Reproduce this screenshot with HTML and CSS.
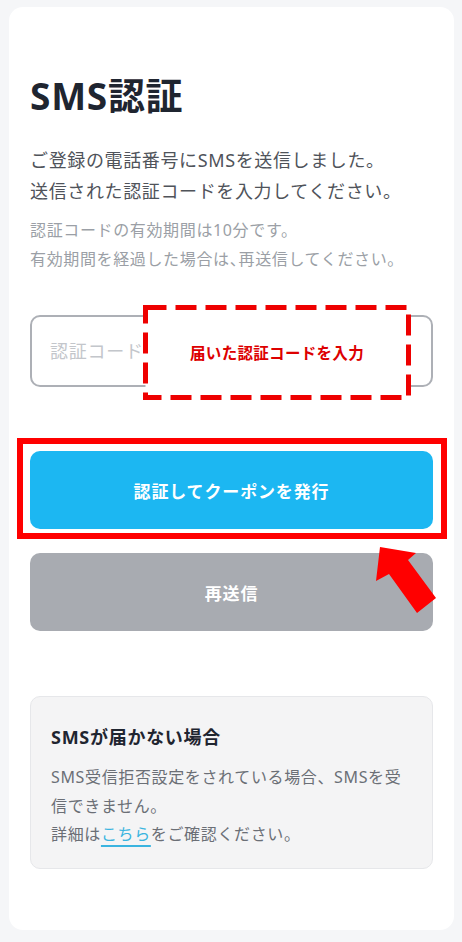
FILE: index.html
```html
<!DOCTYPE html>
<html lang="ja">
<head>
<meta charset="utf-8">
<title>SMS認証</title>
<link rel="stylesheet" href="styles.css">
</head>
<body>
<main class="card">
  <h1 class="title">SMS認証</h1>
  <p class="lead">ご登録の電話番号にSMSを送信しました。<br>送信された認証コードを入力してください。</p>
  <p class="note-text">認証コードの有効期間は10分です。<br>有効期間を経過した場合は<span class="half">、</span>再送信してください。</p>

  <div class="field">
    <input class="code-input" type="text" placeholder="認証コード">
    <div class="callout-dashed">
      <svg class="dash-frame" width="268" height="95" viewBox="0 0 268 95" preserveAspectRatio="none">
        <rect x="2.5" y="2.5" width="263" height="90" fill="#ffffff" stroke="#ee0000" stroke-width="5" stroke-dasharray="21 9"/>
      </svg>
      <span class="callout-text">届いた認証コードを入力</span>
    </div>
  </div>

  <div class="primary-wrap">
    <button class="btn btn-primary">認証してクーポンを発行</button>
    <div class="callout-frame"></div>
    <svg class="callout-arrow" width="60" height="66" viewBox="0 0 60 66">
      <polygon points="4,0 40,6 32,13 60,51 41,66 13,27 0,34" fill="#ff0000"/>
    </svg>
  </div>
  <button class="btn btn-secondary">再送信</button>

  <section class="help">
    <h2 class="help-title">SMSが届かない場合</h2>
    <p class="help-body">SMS受信拒否設定をされている場合、SMSを受<br>信できません。<br>詳細は<a class="help-link" href="#">こちら</a>をご確認ください。</p>
  </section>
</main>
</body>
</html>
```
FILE: styles.css
```css
* { box-sizing: border-box; }
html, body { margin: 0; padding: 0; }
body {
  background: #f5f6f8;
  padding: 7px 8px 13px 9px;
  font-family: "Noto Sans", "Noto Sans CJK JP", sans-serif;
}
.card {
  background: #ffffff;
  border-radius: 14px;
  padding: 65px 21px 61px 21px;
  display: flex;
  flex-direction: column;
}
.title {
  margin: 0;
  font-size: 37px;
  line-height: 48px;
  font-weight: 700;
  color: #1f2530;
  letter-spacing: 0.02em;
}
.lead {
  margin: 24.5px 0 0 0;
  font-size: 18px;
  line-height: 31px;
  color: #4f535a;
  letter-spacing: 0.035em;
}
.note-text {
  margin: 9px 0 0 0;
  font-size: 16px;
  line-height: 29px;
  color: #9b9fa6;
  letter-spacing: 0.04em;
}
.half {
  letter-spacing: -0.45em;
}
.field {
  position: relative;
  margin-top: 41.5px;
}
.code-input {
  display: block;
  width: 100%;
  height: 72px;
  border: 2px solid #adb0b6;
  border-radius: 10px;
  padding: 0 18px;
  font-family: inherit;
  font-size: 18px;
  color: #1f2530;
  background: #fff;
  outline: none;
  letter-spacing: 0.04em;
}
.code-input::placeholder { color: #c3c6cb; }
.callout-dashed {
  position: absolute;
  left: 113px;
  right: 22px;
  top: -10px;
  bottom: -13px;
  display: flex;
  align-items: center;
  justify-content: center;
}
.dash-frame {
  position: absolute;
  inset: 0;
  width: 100%;
  height: 100%;
}
.callout-text {
  position: relative;
  color: #dd0000;
  font-weight: 700;
  font-size: 15.5px;
  letter-spacing: 0.02em;
}
.primary-wrap {
  position: relative;
  margin-top: 64px;
}
.btn {
  display: flex;
  align-items: center;
  justify-content: center;
  width: 100%;
  height: 78px;
  border: none;
  border-radius: 10px;
  color: #ffffff;
  font-family: inherit;
  font-weight: 700;
  font-size: 17px;
  letter-spacing: 0.05em;
}
.btn-primary { background: #1cb7f2; }
.btn-secondary { background: #a8abb1; margin-top: 24px; }
.callout-frame {
  position: absolute;
  left: -13px;
  right: -14px;
  top: -13px;
  bottom: -10px;
  border: 6px solid #ff0000;
  pointer-events: none;
}
.callout-arrow {
  position: absolute;
  left: 346px;
  top: 96px;
  z-index: 2;
}
.help {
  margin-top: 65px;
  background: #f4f4f5;
  border: 1px solid #e6e7ea;
  border-radius: 10px;
  padding: 26px 20px 19px 20px;
}
.help-title {
  margin: 0;
  font-size: 18px;
  line-height: 28px;
  font-weight: 700;
  color: #1f2530;
  letter-spacing: 0.04em;
}
.help-body {
  margin: 12px 0 0 0;
  font-size: 16px;
  line-height: 28.5px;
  color: #6b6f76;
  letter-spacing: 0.04em;
}
.help-link {
  color: #3ab4e0;
  text-decoration: underline;
  text-decoration-thickness: 1.5px;
  text-underline-offset: 5px;
}
```
